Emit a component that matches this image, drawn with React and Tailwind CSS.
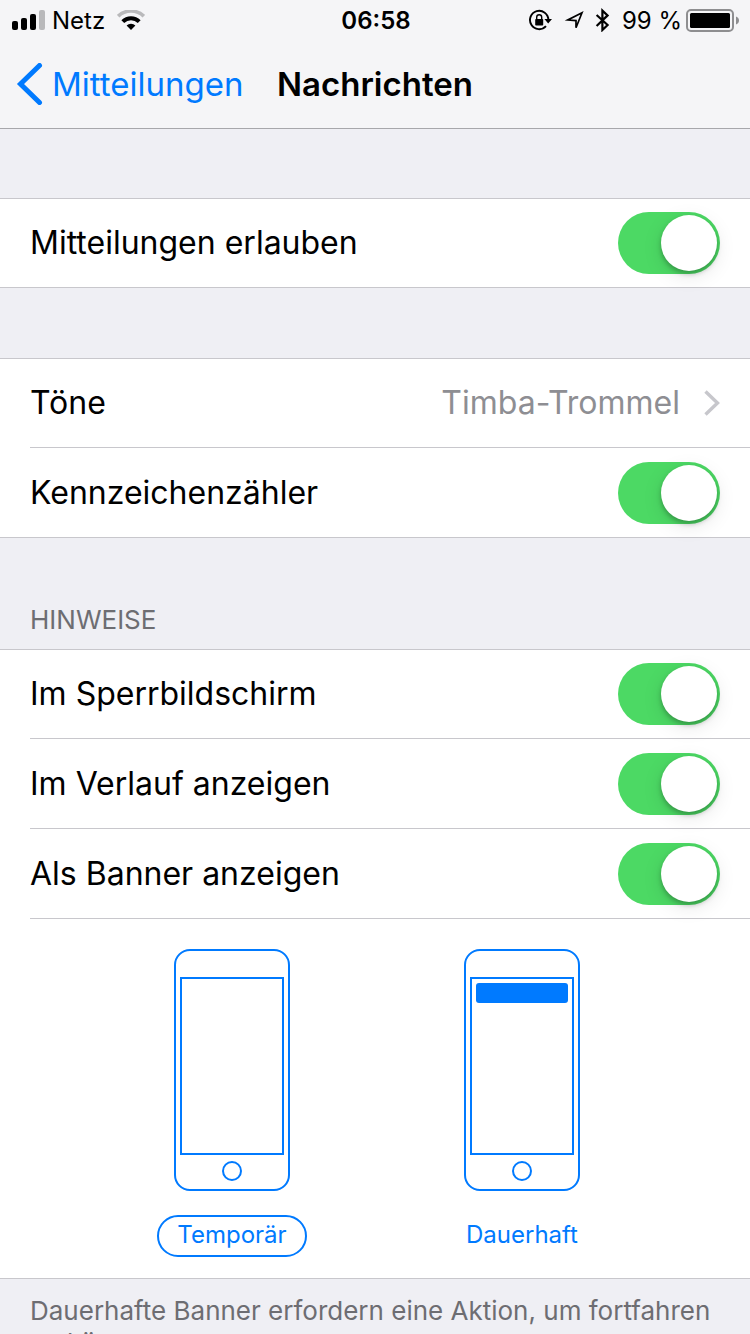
import React, { useState } from "react";

const SignalIcon = () => (
  <svg className="h-5 w-[34px]" viewBox="0 0 34 20" aria-hidden="true">
    <rect x="0" y="11" width="6" height="9" rx="2" />
    <rect x="9" y="8" width="6" height="12" rx="2" />
    <rect x="18" y="4" width="6" height="16" rx="2" />
    <rect x="27" y="0" width="6" height="20" rx="2" fill="#b9b9bb" />
  </svg>
);

const WifiIcon = () => (
  <svg className="h-5 w-7" viewBox="0 0 28 20" fill="none" aria-hidden="true">
    <path d="M1.2 6.2a18.5 18.5 0 0 1 25.6 0" stroke="#b9b9bb" strokeWidth="3.6" />
    <path d="M5.8 11.6a11.6 11.6 0 0 1 16.4 0" stroke="#000" strokeWidth="4" />
    <path d="M14 20l-4.4-4.4a6.4 6.4 0 0 1 8.8 0z" fill="#000" />
  </svg>
);

const RotationLockIcon = () => (
  <svg className="h-6 w-6" viewBox="0 0 24 24" fill="none" aria-hidden="true">
    <path d="M20.4 12a9.2 9.2 0 1 0-2.4 6.2" stroke="#000" strokeWidth="1.9" />
    <path d="M16.4 11h7.6l-3.8 4.4z" fill="#000" />
    <rect x="7.2" y="11" width="8" height="6.6" rx="0.8" fill="#000" />
    <path d="M8.7 11.6V9.2a2.5 2.5 0 0 1 5 0v2.4" stroke="#000" strokeWidth="1.4" />
  </svg>
);

const LocationIcon = () => (
  <svg className="mr-2.5 ml-3 h-6 w-5" viewBox="0 0 20 24" fill="none" aria-hidden="true">
    <path d="M18 4.8L12 19.8V12.6L3.8 12z" stroke="#000" strokeWidth="1.7" />
  </svg>
);

const BluetoothIcon = () => (
  <svg className="h-6 w-4" viewBox="0 0 16 24" fill="none" aria-hidden="true">
    <path
      d="M2.6 7l11 10-5.2 5V2.6l5.2 4.8L2.6 18"
      stroke="#000"
      strokeWidth="2.2"
    />
  </svg>
);

const BatteryIcon = () => (
  <svg className="h-6 w-[54px]" viewBox="0 0 54 24" aria-hidden="true">
    <rect x="1" y="2" width="46" height="21" rx="4" fill="none" stroke="#8e8e90" strokeWidth="2" />
    <rect x="4" y="5" width="40" height="15" rx="1.5" />
    <path d="M50 8.5q3 1.2 3 4t-3 4z" fill="#8e8e90" />
  </svg>
);

const Toggle = ({ id, checked, onChange }) => (
  <input
    id={id}
    type="checkbox"
    role="switch"
    checked={checked}
    onChange={onChange}
    className="h-[62px] w-[102px] shrink-0 cursor-pointer appearance-none rounded-full bg-[#e5e5ea] p-[3px] before:block before:size-14 before:rounded-full before:bg-white before:shadow-[0_3px_5px_rgba(0,0,0,0.25),0_5px_20px_rgba(0,0,0,0.1)] checked:bg-[#4cd964] checked:pl-[43px]"
  />
);

const ToggleRow = ({ id, label }) => {
  const [on, setOn] = useState(true);

  return (
    <div className="ml-[30px] flex h-[90px] items-center justify-between border-b border-[#c8c7cc] pr-[30px] first:h-[89px] last:border-b-0 last:h-[89px] only:h-[88px]">
      <label htmlFor={id}>{label}</label>
      <Toggle id={id} checked={on} onChange={() => setOn(!on)} />
    </div>
  );
};

const PhoneDrawing = ({ banner }) => (
  <svg
    className="h-[242px] w-[116px]"
    viewBox="0 0 116 242"
    fill="none"
    stroke="#007aff"
    strokeWidth="2"
    aria-hidden="true"
  >
    <rect x="1" y="1" width="114" height="240" rx="15" />
    <rect x="7" y="29" width="102" height="176" />
    <circle cx="58" cy="222" r="9" />
    {banner && (
      <rect x="12" y="34" width="92" height="20" rx="3" fill="#007aff" stroke="none" />
    )}
  </svg>
);

const BannerOption = ({ value, selected, onSelect, banner }) => (
  <label className="flex w-[150px] cursor-pointer flex-col items-center gap-6">
    <input
      type="radio"
      name="bannerStyle"
      value={value}
      checked={selected}
      onChange={() => onSelect(value)}
      className="sr-only"
    />
    <PhoneDrawing banner={banner} />
    <span
      className={`flex h-[42px] w-full items-center justify-center rounded-full border-2 pb-0.5 text-2xl text-[#007aff] ${selected ? "border-[#007aff]" : "border-transparent"}`}
    >
      {value}
    </span>
  </label>
);

const App = () => {
  const [bannerStyle, setBannerStyle] = useState("Temporär");

  return (
    <div className="min-h-screen bg-[#efeff4] font-[Inter,'Liberation_Sans',sans-serif] text-[32px] leading-10 text-black">
      <header className="border-b border-[#a7a7ab] bg-[#f5f5f7]">
        {/* status bar */}
        <div className="grid h-10 grid-cols-[1fr_auto_1fr] items-center pr-2.5 pl-3 text-2xl leading-8">
          <div className="flex items-center">
            <SignalIcon />
            <span className="mr-3 ml-1.5 pt-0.5">Netz</span>
            <WifiIcon />
          </div>
          <span className="pt-0.5 font-semibold">06:58</span>
          <div className="flex items-center justify-end">
            <RotationLockIcon />
            <LocationIcon />
            <BluetoothIcon />
            <span className="mr-1 ml-3 pt-0.5">99&nbsp;%</span>
            <BatteryIcon />
          </div>
        </div>

        {/* navigation */}
        <nav className="grid h-[88px] grid-cols-[1fr_auto_1fr] items-center px-4 text-[33px]">
          <a href="#mitteilungen" className="flex items-center gap-2 text-[#007aff]">
            <svg className="h-[42px] w-7" viewBox="0 0 28 42" fill="none" aria-hidden="true">
              <path
                d="M23.5 2.5L4.5 21l19 18.5"
                stroke="#007aff"
                strokeWidth="5"
                strokeLinecap="round"
              />
            </svg>
            Mitteilungen
          </a>
          <h1 className="font-semibold">Nachrichten</h1>
        </nav>
      </header>

      <main>
        <section className="mt-[69px] border-y border-[#c8c7cc] bg-white">
          <ToggleRow id="allow" label="Mitteilungen erlauben" />
        </section>

        <section className="mt-[70px] border-y border-[#c8c7cc] bg-white">
          <button
            type="button"
            className="block w-full cursor-pointer pl-[30px] text-left"
          >
            <span className="flex h-[89px] items-center border-b border-[#c8c7cc] pr-[30px]">
              <span className="flex-1">Töne</span>
              <span className="text-[#8e8e93]">Timba-Trommel</span>
              <svg className="ml-6 h-[26px] w-4" viewBox="0 0 16 26" fill="none" aria-hidden="true">
                <path d="M1.5 1.5L13.5 13l-12 11.5" stroke="#c7c7cc" strokeWidth="3.4" />
              </svg>
            </span>
          </button>
          <ToggleRow id="badges" label="Kennzeichenzähler" />
        </section>

        <h2 className="mt-[62px] mb-[9px] px-[30px] text-[26px] text-[#6d6d72]">
          HINWEISE
        </h2>
        <section className="border-y border-[#c8c7cc] bg-white">
          <ToggleRow id="lockscreen" label="Im Sperrbildschirm" />
          <ToggleRow id="history" label="Im Verlauf anzeigen" />
          <ToggleRow id="banner" label="Als Banner anzeigen" />
          <div className="flex justify-center gap-[140px] pt-[30px] pb-[21px] pl-1">
            <BannerOption
              value="Temporär"
              selected={bannerStyle === "Temporär"}
              onSelect={setBannerStyle}
            />
            <BannerOption
              value="Dauerhaft"
              selected={bannerStyle === "Dauerhaft"}
              onSelect={setBannerStyle}
              banner
            />
          </div>
        </section>
        <p className="px-[30px] pt-4 text-[26px] leading-8 text-[#6d6d72]">
          Dauerhafte Banner erfordern eine Aktion, um fortfahren zu können.
        </p>
      </main>
    </div>
  );
};

export default App;
